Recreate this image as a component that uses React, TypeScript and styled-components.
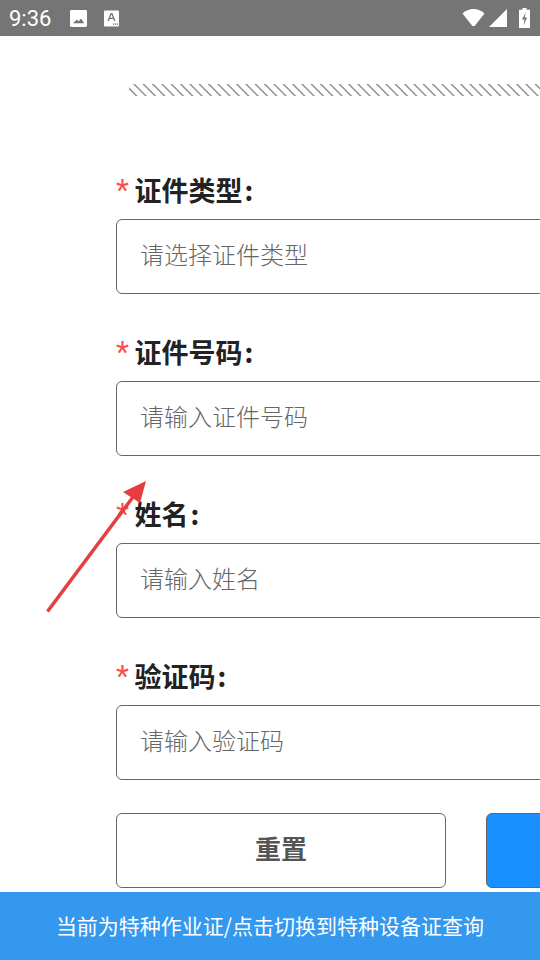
import styled, { createGlobalStyle } from "styled-components";

const GlobalStyle = createGlobalStyle`
  html, body {
    margin: 0;
    padding: 0;
    background: #fff;
  }
  body {
    font-family: "Noto Sans CJK SC", "Roboto", sans-serif;
  }
`;

const fields = [
  { label: "证件类型", placeholder: "请选择证件类型" },
  { label: "证件号码", placeholder: "请输入证件号码" },
  { label: "姓名", placeholder: "请输入姓名" },
  { label: "验证码", placeholder: "请输入验证码" },
];

export default function App() {
  return (
    <>
      <GlobalStyle />
      <Screen>
        <StatusBar>
          <Time>9:36</Time>
          <NoticeIcons>
            <svg width="17" height="17" viewBox="0 0 18 18">
              <path
                fill="#fff"
                fillRule="evenodd"
                d="M1.500 0h15A1.500 1.500 0 0 1 18 1.500v15a1.500 1.500 0 0 1-1.500 1.500h-15A1.500 1.500 0 0 1 0 16.500v-15A1.500 1.500 0 0 1 1.500 0zM3 14h12l-3.300-5-2.500 3.200-1.700-2.100z"
              />
            </svg>
            <svg width="15" height="17" viewBox="0 0 15 16">
              <rect width="15" height="16" rx="1" fill="#fff" />
              <path
                fill="#757575"
                d="M3.500 10.500 6.600 2.500h1.800l3.100 8H10l-.7-2H5.700l-.7 2zM6.200 7.200h2.600L7.500 3.700zM9 13h1.200v1.200H9zM10.900 13h1.200v1.200h-1.200zM12.800 13H14v1.200h-1.200z"
              />
            </svg>
          </NoticeIcons>
          <SystemIcons>
            <svg width="23" height="18" viewBox="0 0 23 18">
              <path
                fill="#fff"
                d="M0.500 4.500C3.500 1.700 7.300 0 11.500 0s8 1.700 11 4.500L13 16.500c-.8 1-2.200 1-3 0z"
              />
            </svg>
            <SignalIcon width="18" height="18" viewBox="0 0 18 18">
              <path fill="#fff" d="M0 18 18 0v18z" />
            </SignalIcon>
            <svg width="11" height="20" viewBox="0 0 11 20">
              <path
                fill="#fff"
                fillRule="evenodd"
                d="M3.500 0h4v1.800H11V20H0V1.800h3.500zM6.700 4.500 3 11.500h2.500l-1 6 3.700-8H5.700z"
              />
            </svg>
          </SystemIcons>
        </StatusBar>

        <Content>
          <Hatch />
          <Form>
            {fields.map((field) => (
              <Field key={field.label}>
                <Label>
                  <Star>*</Star>
                  {field.label}
                  <Colon>:</Colon>
                </Label>
                <InputBox>{field.placeholder}</InputBox>
              </Field>
            ))}
            <Buttons>
              <ResetButton>重置</ResetButton>
              <SubmitButton />
            </Buttons>
          </Form>
        </Content>

        <SwitchBar>当前为特种作业证/点击切换到特种设备证查询</SwitchBar>

        <Arrow width="540" height="960" viewBox="0 0 540 960">
          <line x1="47.500" y1="611.500" x2="133" y2="497" stroke="#e53e41" strokeWidth="3.500" />
          <path fill="#e53e41" d="M146 481 123 492 140 503z" />
        </Arrow>
      </Screen>
    </>
  );
}

const Screen = styled.div`
  position: relative;
  width: 540px;
  height: 960px;
  overflow: hidden;
  display: flex;
  flex-direction: column;
  background: #fff;
`;

const StatusBar = styled.div`
  height: 36px;
  flex-shrink: 0;
  display: flex;
  align-items: center;
  padding: 0 10px 0 9px;
  background: #757575;
  color: #fff;
`;

const Time = styled.div`
  width: 61px;
  font-size: 22px;
  font-family: "Roboto", sans-serif;
`;

const NoticeIcons = styled.div`
  display: flex;
  align-items: center;
  gap: 17px;
`;

const SystemIcons = styled.div`
  margin-left: auto;
  display: flex;
  align-items: center;
  gap: 4px;
`;

const SignalIcon = styled.svg`
  margin-right: 8px;
`;

const Content = styled.div`
  flex: 1;
  min-height: 0;
  padding-left: 116px;
  overflow: hidden;
`;

const Hatch = styled.div`
  height: 12px;
  margin: 48px 0 0 13px;
  background-image: repeating-linear-gradient(
    45deg,
    #fff 0,
    #fff 4.200px,
    #999 5px,
    #999 5.800px,
    #fff 6.600px
  );
`;

const Form = styled.div`
  width: 520px;
  padding-top: 79px;
  display: flex;
  flex-direction: column;
`;

const Field = styled.div`
  height: 162px;
`;

const Label = styled.div`
  height: 29px;
  display: flex;
  align-items: center;
  font-size: 27px;
  line-height: 29px;
  font-weight: 700;
  color: #222;
  margin-bottom: 15px;
`;

const Star = styled.span`
  width: 18.500px;
  font-size: 30px;
  color: #ff4d4f;
  font-weight: 400;
  font-family: "Roboto", sans-serif;
`;

const Colon = styled.span`
  margin-left: 2px;
`;

const InputBox = styled.div`
  height: 75px;
  box-sizing: border-box;
  display: flex;
  align-items: center;
  padding: 0 0 7px 23px;
  border: 1px solid #666;
  border-radius: 6px;
  font-size: 24px;
  font-weight: 300;
  color: #666;
`;

const Buttons = styled.div`
  display: flex;
  gap: 40px;
  margin-top: -10px;
`;

const ResetButton = styled.div`
  width: 330px;
  height: 75px;
  box-sizing: border-box;
  display: flex;
  align-items: center;
  justify-content: center;
  padding: 0 0 7px 0;
  border: 1px solid #666;
  border-radius: 6px;
  font-size: 26px;
  font-weight: 700;
  color: #555;
`;

const SubmitButton = styled.div`
  width: 150px;
  height: 75px;
  box-sizing: border-box;
  flex-shrink: 0;
  border: 1px solid #666;
  border-radius: 6px;
  background: #1890ff;
`;

const SwitchBar = styled.div`
  height: 68px;
  flex-shrink: 0;
  display: flex;
  align-items: center;
  justify-content: center;
  padding-bottom: 2px;
  box-sizing: border-box;
  background: #3498ee;
  color: #fff;
  font-size: 21px;
`;

const Arrow = styled.svg`
  position: absolute;
  top: 0;
  left: 0;
  pointer-events: none;
`;
